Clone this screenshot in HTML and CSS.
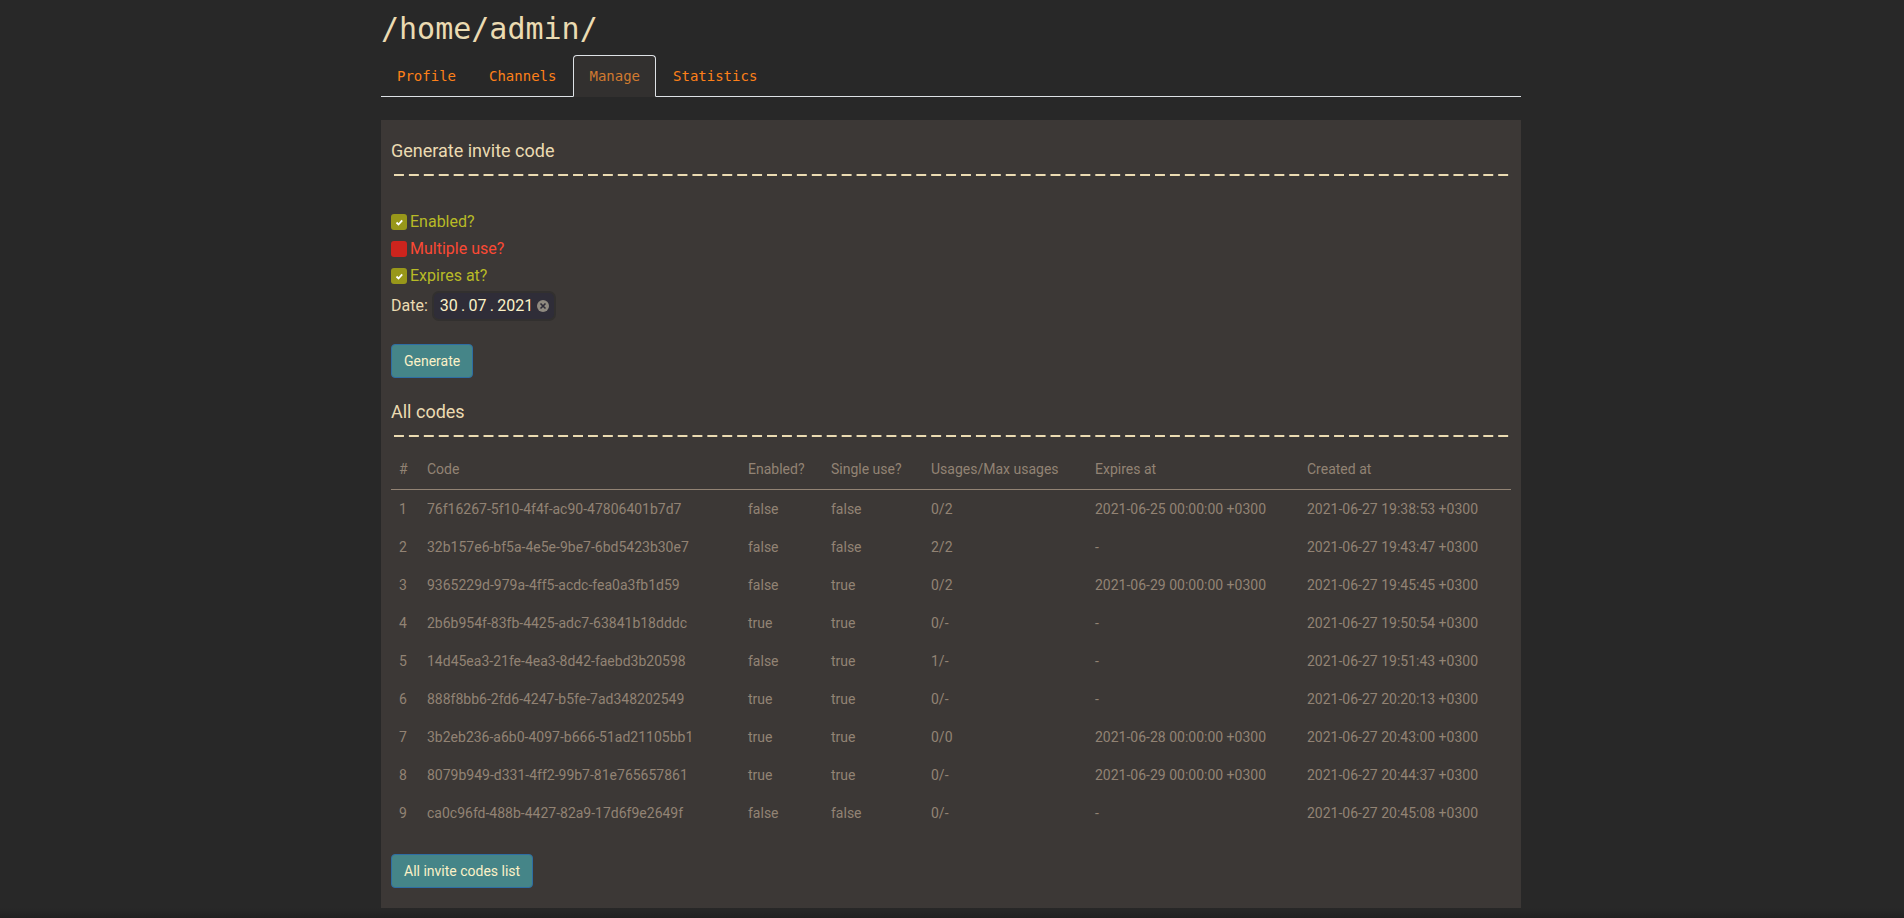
FILE: index.html
```html
<!DOCTYPE html>
<html lang="en">
<head>
<meta charset="utf-8">
<title>/home/admin/</title>
<link rel="stylesheet" href="styles.css">
</head>
<body>
<main class="container">
  <h1 class="title">/home/admin/</h1>
  <nav class="tabs">
    <a class="tab" href="#profile">Profile</a>
    <a class="tab" href="#channels">Channels</a>
    <a class="tab tab-active" href="#manage" aria-current="page">Manage</a>
    <a class="tab" href="#statistics">Statistics</a>
  </nav>
  <div class="panel">
    <h2 class="heading">Generate invite code</h2>
    <form class="form">
      <label class="check"><input type="checkbox" checked><span>Enabled?</span></label>
      <label class="check"><input type="checkbox"><span>Multiple use?</span></label>
      <label class="check"><input type="checkbox" checked><span>Expires at?</span></label>
      <div class="date">
        <label for="date">Date:</label>
        <div class="date-box">
          <input id="date" type="text" value="30&#8201;.&#8201;07&#8201;.&#8201;2021">
          <button class="clear" type="button" aria-label="Clear">
            <svg width="12" height="12" viewBox="0 0 12 12"><circle cx="6" cy="6" r="6" fill="#8f8a80"/><path d="M3.5 3.5l5 5M8.5 3.5l-5 5" stroke="#2f2d38" stroke-width="1.6"/></svg>
          </button>
        </div>
      </div>
      <button class="button" type="button">Generate</button>
    </form>
    <h2 class="heading">All codes</h2>
    <table class="codes">
      <colgroup><col class="c-num"><col class="c-code"><col class="c-enabled"><col class="c-single"><col class="c-usage"><col class="c-expires"><col></colgroup>
      <thead><tr><th>#</th><th>Code</th><th>Enabled?</th><th>Single use?</th><th>Usages/Max usages</th><th>Expires at</th><th>Created at</th></tr></thead>
      <tbody>
        <tr><td>1</td><td>76f16267-5f10-4f4f-ac90-47806401b7d7</td><td>false</td><td>false</td><td>0/2</td><td>2021-06-25 00:00:00 +0300</td><td>2021-06-27 19:38:53 +0300</td></tr>
        <tr><td>2</td><td>32b157e6-bf5a-4e5e-9be7-6bd5423b30e7</td><td>false</td><td>false</td><td>2/2</td><td>-</td><td>2021-06-27 19:43:47 +0300</td></tr>
        <tr><td>3</td><td>9365229d-979a-4ff5-acdc-fea0a3fb1d59</td><td>false</td><td>true</td><td>0/2</td><td>2021-06-29 00:00:00 +0300</td><td>2021-06-27 19:45:45 +0300</td></tr>
        <tr><td>4</td><td>2b6b954f-83fb-4425-adc7-63841b18dddc</td><td>true</td><td>true</td><td>0/-</td><td>-</td><td>2021-06-27 19:50:54 +0300</td></tr>
        <tr><td>5</td><td>14d45ea3-21fe-4ea3-8d42-faebd3b20598</td><td>false</td><td>true</td><td>1/-</td><td>-</td><td>2021-06-27 19:51:43 +0300</td></tr>
        <tr><td>6</td><td>888f8bb6-2fd6-4247-b5fe-7ad348202549</td><td>true</td><td>true</td><td>0/-</td><td>-</td><td>2021-06-27 20:20:13 +0300</td></tr>
        <tr><td>7</td><td>3b2eb236-a6b0-4097-b666-51ad21105bb1</td><td>true</td><td>true</td><td>0/0</td><td>2021-06-28 00:00:00 +0300</td><td>2021-06-27 20:43:00 +0300</td></tr>
        <tr><td>8</td><td>8079b949-d331-4ff2-99b7-81e765657861</td><td>true</td><td>true</td><td>0/-</td><td>2021-06-29 00:00:00 +0300</td><td>2021-06-27 20:44:37 +0300</td></tr>
        <tr><td>9</td><td>ca0c96fd-488b-4427-82a9-17d6f9e2649f</td><td>false</td><td>false</td><td>0/-</td><td>-</td><td>2021-06-27 20:45:08 +0300</td></tr>
      </tbody>
    </table>
    <a class="button" href="#codes">All invite codes list</a>
  </div>
</main>
<footer class="shade"></footer>
</body>
</html>
```
FILE: styles.css
```css
* { box-sizing: border-box; }

body {
  margin: 0;
  background: #282828;
  color: #ebdbb2;
  font: 16px/24px Roboto, sans-serif;
}

.container {
  max-width: 1142px;
  margin: 0 auto;
  padding-right: 2px;
}

.title {
  margin: 0;
  padding: 11px 0 9px;
  font: 400 30px/35px "DejaVu Sans Mono", monospace;
}

.tabs {
  display: flex;
  gap: 1px;
  border-bottom: 1px solid #dee2e6;
  font: 14px/20px "DejaVu Sans Mono", monospace;
}

.tab {
  margin-bottom: -1px;
  padding: 10px 15px;
  border: 1px solid transparent;
  border-radius: 4px 4px 0 0;
  color: #fe8019;
  text-decoration: none;
}

.tab-active {
  border-color: #dee2e6;
  border-bottom-color: #32302f;
  background: #32302f;
  color: #d07a30;
}

.panel {
  margin-top: 23px;
  padding: 20px 10px;
  background: #3c3836;
}

.heading {
  margin: 0;
  padding-bottom: 14px;
  background: linear-gradient(90deg, transparent 3px, #ebdbb2 3px, #ebdbb2 13px, transparent 13px) left bottom / 15px 2px round no-repeat;
  font: 400 18px/22px Roboto, sans-serif;
}

.form {
  display: flex;
  flex-direction: column;
  align-items: flex-start;
  padding: 32px 0 23px;
}

.check {
  display: flex;
  align-items: center;
  gap: 3px;
  height: 27px;
  color: #fb4934;
}

.check:has(:checked) { color: #b8bb26; }

.check input {
  appearance: none;
  width: 16px;
  height: 16px;
  margin: 0;
  border-radius: 3px;
  background: #cc241d;
}

.check input:checked {
  background: #98971a url("data:image/svg+xml,%3Csvg xmlns='http://www.w3.org/2000/svg' viewBox='0 0 16 16'%3E%3Cpath d='M5.5 8.5l2 2 3.7-4.2' fill='none' stroke='white' stroke-width='1.8'/%3E%3C/svg%3E");
}

.date {
  display: flex;
  align-items: center;
  gap: 4px;
  margin: 2px 0 23px;
}

.date-box {
  display: flex;
  align-items: center;
  height: 30px;
  padding: 0 5px 0 6px;
  border: 2px solid #32302f;
  border-radius: 7px;
  background: #2f2d38;
}

.date-box input {
  width: 97px;
  padding: 0;
  border: 0;
  background: none;
  color: #fbf1c7;
  font: 16px/24px Roboto, sans-serif;
}

.clear {
  display: flex;
  padding: 0;
  border: 0;
  background: none;
}

.button {
  display: inline-block;
  padding: 6px 12px;
  border: 1px solid #2e6da4;
  border-radius: 4px;
  background: #458588;
  color: #fbf1c7;
  font: 14px/20px Roboto, sans-serif;
  text-decoration: none;
}

.codes {
  width: 100%;
  margin-bottom: 22px;
  border-collapse: collapse;
  table-layout: fixed;
  color: #928374;
  font-size: 14px;
  line-height: 20px;
}

.codes th,
.codes td {
  padding: 9px 8px;
  font-weight: 400;
  text-align: left;
  white-space: nowrap;
}

.codes th {
  padding: 22px 8px 10px;
  border-bottom: 1px solid #928374;
}

.c-num { width: 28px; }
.c-code { width: 321px; }
.c-enabled { width: 83px; }
.c-single { width: 100px; }
.c-usage { width: 164px; }
.c-expires { width: 212px; }

.shade {
  height: 10px;
  background: linear-gradient(#282828, #202020);
}
```
